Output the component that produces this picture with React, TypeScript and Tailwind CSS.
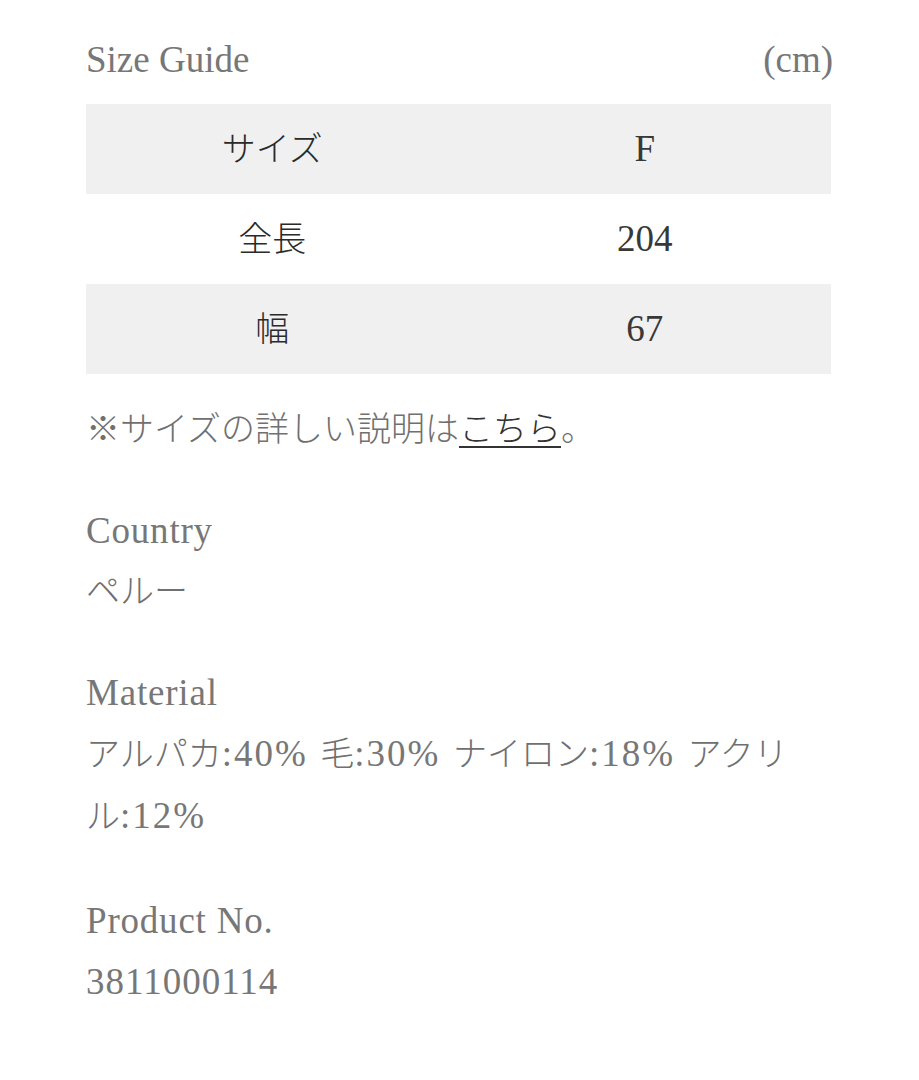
const font = {
  fontFamily: '"Liberation Serif", "Noto Sans CJK JP", serif',
};

const rows = [
  { label: "サイズ", value: "F", shaded: true },
  { label: "全長", value: "204", shaded: false },
  { label: "幅", value: "67", shaded: true },
];

// Latin runs are set a bit larger so the serif matches the wider original face
function L({ children }: { children: React.ReactNode }) {
  return <span className="text-[37px] tracking-[2px] text-[#777]">{children}</span>;
}

function Spec({ title, children }: { title: string; children: React.ReactNode }) {
  return (
    <div className="text-[34px] font-light leading-[61px] text-[#707070]">
      <div className="text-[37px] tracking-[0.8px] text-[#777]">{title}</div>
      <div className="[word-spacing:4px]">{children}</div>
    </div>
  );
}

export default function App() {
  return (
    <div className="min-h-[1080px] bg-white px-[86px] pt-[30px] antialiased" style={font}>
      {/* Header */}
      <div className="flex items-center justify-between text-[37px] leading-[60px] text-[#777]">
        <span>Size Guide</span>
        <span>(cm)</span>
      </div>

      {/* Table */}
      <div className="mt-[14px] w-[745px]">
        {rows.map((r) => (
          <div
            key={r.label}
            className={`grid h-[90px] grid-cols-2 items-center text-[#2a2a2a] ${
              r.shaded ? "bg-[#f0f0f0]" : "bg-white"
            }`}
          >
            <div className="text-center text-[34px] font-light">{r.label}</div>
            <div className="text-center text-[37px] text-[#383838]">{r.value}</div>
          </div>
        ))}
      </div>

      <p className="mt-[26px] text-[34px] font-light leading-[60px] text-[#707070]">
        ※サイズの詳しい説明は
        <span className="text-[#333] underline decoration-[2px] underline-offset-[5px]">こちら</span>
        。
      </p>

      <div className="mt-[40px] flex flex-col">
        <Spec title="Country">ペルー</Spec>
        <div className="mt-[40px]">
          <Spec title="Material">
            アルパカ<L>:40%</L> 毛<L>:30%</L> ナイロン<L>:18%</L> アクリル<L>:12%</L>
          </Spec>
        </div>
        <div className="mt-[43px]">
          <Spec title="Product No.">
            <span className="text-[37px] tracking-[1px] text-[#777]">3811000114</span>
          </Spec>
        </div>
      </div>
    </div>
  );
}
